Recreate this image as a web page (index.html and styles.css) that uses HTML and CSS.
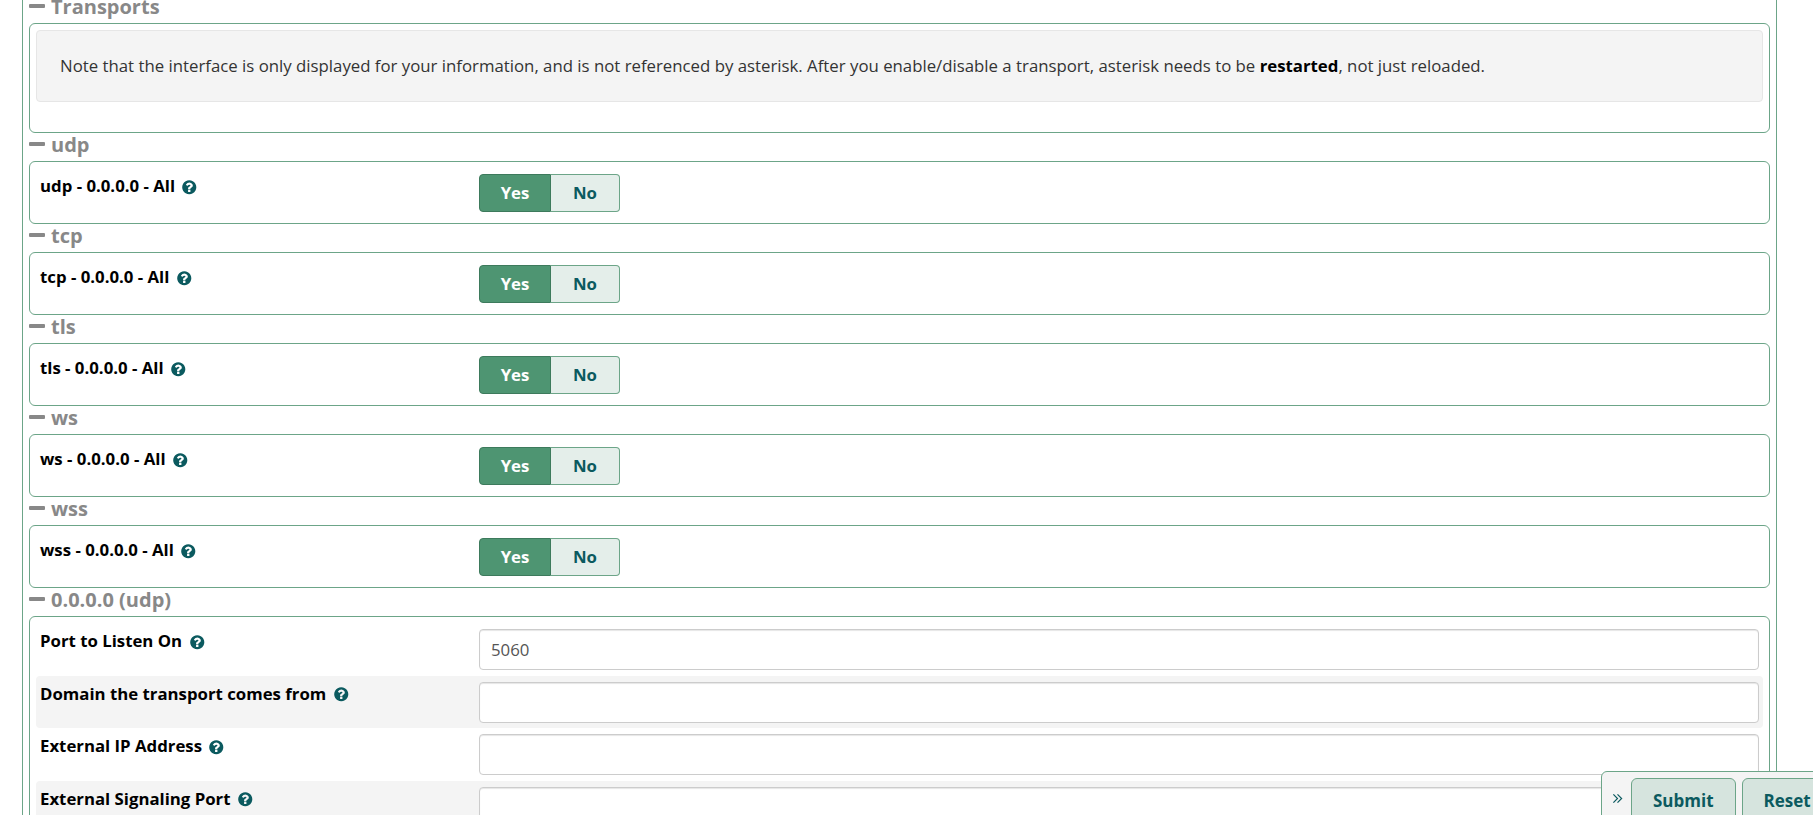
FILE: index.html
```html
<!DOCTYPE html>
<html lang="en">
<head>
  <meta charset="UTF-8">
  <meta name="viewport" content="width=device-width, initial-scale=1.0">
  <title>SIP Settings - Transports</title>
  <link rel="stylesheet" href="styles.css">
</head>
<body>

  <svg class="icon-defs" aria-hidden="true">
    <symbol id="help" viewBox="0 0 1792 1792">
      <path d="M1024 1376v-192q0-14-9-23t-23-9h-192q-14 0-23 9t-9 23v192q0 14 9 23t23 9h192q14 0 23-9t9-23zm256-672q0-88-55.5-163t-138.5-116-170-41q-243 0-371 213-15 24 8 42l132 100q7 6 19 6 16 0 25-12 53-68 86-92 34-24 86-24 48 0 85.5 26t37.5 59q0 38-20 61t-68 45q-63 28-115.5 86.5t-52.5 125.5v36q0 14 9 23t23 9h192q14 0 23-9t9-23q0-19 21.5-49.5t54.5-49.5q32-18 49-28.5t46-35 44.5-48 28-60.5 12.5-81zm384 192q0 209-103 385.5t-279.5 279.5-385.5 103-385.5-103-279.5-279.5-103-385.5 103-385.5 279.5-279.5 385.5-103 385.5 103 279.5 279.5 103 385.5z"/>
    </symbol>
  </svg>

  <div class="page">

    <!-- Transports -->
    <div class="section-title"><span class="minus"></span>Transports</div>
    <div class="section section-note">
      <div class="well">Note that the interface is only displayed for your information, and is not referenced by asterisk. After you enable/disable a transport, asterisk needs to be <b>restarted</b>, not just reloaded.</div>
    </div>

    <div class="section-title"><span class="minus"></span>udp</div>
    <div class="section">
      <div class="row">
        <label class="row-label">udp - 0.0.0.0 - All <svg class="help"><use href="#help"/></svg></label>
        <div class="toggle"><span class="toggle-yes">Yes</span><span class="toggle-no">No</span></div>
      </div>
    </div>

    <div class="section-title"><span class="minus"></span>tcp</div>
    <div class="section">
      <div class="row">
        <label class="row-label">tcp - 0.0.0.0 - All <svg class="help"><use href="#help"/></svg></label>
        <div class="toggle"><span class="toggle-yes">Yes</span><span class="toggle-no">No</span></div>
      </div>
    </div>

    <div class="section-title"><span class="minus"></span>tls</div>
    <div class="section">
      <div class="row">
        <label class="row-label">tls - 0.0.0.0 - All <svg class="help"><use href="#help"/></svg></label>
        <div class="toggle"><span class="toggle-yes">Yes</span><span class="toggle-no">No</span></div>
      </div>
    </div>

    <div class="section-title"><span class="minus"></span>ws</div>
    <div class="section">
      <div class="row">
        <label class="row-label">ws - 0.0.0.0 - All <svg class="help"><use href="#help"/></svg></label>
        <div class="toggle"><span class="toggle-yes">Yes</span><span class="toggle-no">No</span></div>
      </div>
    </div>

    <div class="section-title"><span class="minus"></span>wss</div>
    <div class="section">
      <div class="row">
        <label class="row-label">wss - 0.0.0.0 - All <svg class="help"><use href="#help"/></svg></label>
        <div class="toggle"><span class="toggle-yes">Yes</span><span class="toggle-no">No</span></div>
      </div>
    </div>

    <!-- Bind address settings -->
    <div class="section-title"><span class="minus"></span>0.0.0.0 (udp)</div>
    <div class="section section-form">
      <div class="form-row">
        <label class="row-label">Port to Listen On <svg class="help"><use href="#help"/></svg></label>
        <input type="text" class="text-input" value="5060">
      </div>
      <div class="form-row striped">
        <label class="row-label">Domain the transport comes from <svg class="help"><use href="#help"/></svg></label>
        <input type="text" class="text-input">
      </div>
      <div class="form-row">
        <label class="row-label">External IP Address <svg class="help"><use href="#help"/></svg></label>
        <input type="text" class="text-input">
      </div>
      <div class="form-row striped">
        <label class="row-label">External Signaling Port <svg class="help"><use href="#help"/></svg></label>
        <input type="text" class="text-input">
      </div>
    </div>
  </div>

  <!-- Floating action bar -->
  <div class="action-bar">
    <svg class="collapse" viewBox="0 0 12 12"><path d="M1.500 1.500 6 6l-4.500 4.500M6 1.500 10.500 6 6 10.500"/></svg>
    <button class="action-btn">Submit</button>
    <button class="action-btn">Reset</button>
  </div>

</body>
</html>
```

FILE: styles.css
```css
/* Basic Reset */
* {
  margin: 0;
  padding: 0;
  box-sizing: border-box;
}
html, body {
  height: 815px;
  overflow: hidden;
}
body {
  font-family: "Open Sans", "Liberation Sans", sans-serif;
  font-size: 16.8px;
  background-color: #fff;
  color: #333;
  position: relative;
}
.icon-defs {
  display: none;
}

/* Page column, scrolled so the first title is cut off */
.page {
  margin: -5px 36px 0 22px;
  padding: 0 6px;
  height: 840px;
  border-left: 1px solid #6ca588;
  border-right: 1px solid #6ca588;
}

/* Section titles */
.section-title {
  height: 28px;
  padding-bottom: 6px;
  display: flex;
  align-items: center;
  color: #888;
  font-size: 20px;
  font-weight: 700;
}
.minus {
  width: 16px;
  height: 4px;
  margin-right: 6px;
  border-radius: 1px;
  background-color: #888;
}

/* Sections */
.section {
  border: 1px solid #6ca588;
  border-radius: 6px;
  height: 63px;
  padding: 12px 6px 0 10px;
}
.section-note {
  height: 110px;
  padding: 6px 6px 0 6px;
}
.section-form {
  height: auto;
  padding: 6px 6px 0 6px;
}

/* Info box */
.well {
  height: 72px;
  padding: 23px 23px 0;
  background-color: #f4f4f4;
  border: 1px solid #e6e6e6;
  border-radius: 4px;
  color: #333;
}
.well b {
  color: #000;
}

/* Rows */
.row,
.form-row {
  display: grid;
  grid-template-columns: 439px 1fr;
}
.form-row {
  grid-template-columns: 443px 1fr;
  height: 52.500px;
  padding: 6px 4px 0 0;
  border-radius: 4px;
}
.form-row .row-label {
  padding-left: 4px;
}
.striped {
  background-color: #f4f4f4;
}
.row-label {
  font-weight: 700;
  color: #000;
  line-height: 24px;
  white-space: nowrap;
}
.help {
  width: 16.500px;
  height: 16.500px;
  margin-left: 2px;
  vertical-align: -3px;
  fill: #0b5a5f;
}

/* Yes/No toggle */
.toggle {
  display: flex;
  width: 141px;
  height: 38px;
  font-weight: 700;
  line-height: 36px;
  text-align: center;
}
.toggle-yes {
  width: 72px;
  background-color: #4e9572;
  border: 1px solid #3d7a5c;
  border-radius: 4px 0 0 4px;
  color: #fff;
}
.toggle-no {
  width: 69px;
  background-color: #e4eeea;
  border: 1px solid #6ca588;
  border-left: none;
  border-radius: 0 4px 4px 0;
  color: #0b5a5f;
}

/* Inputs */
.text-input {
  display: block;
  width: 100%;
  height: 41px;
  padding: 0 11px;
  font-family: inherit;
  font-size: 16.8px;
  color: #555;
  background-color: #fff;
  border: 1px solid #ccc;
  border-radius: 4px;
  box-shadow: inset 0 1px 1px rgba(0, 0, 0, 0.1);
}

/* Floating action bar */
.action-bar {
  position: absolute;
  top: 771px;
  left: 1601px;
  width: 260px;
  height: 60px;
  display: flex;
  align-items: flex-start;
  padding: 6px 0 0 10px;
  background-color: #f4f4f4;
  border: 1px solid #6ca588;
  border-radius: 6px 0 0 0;
}
.collapse {
  flex: none;
  width: 11px;
  height: 11px;
  margin: 15px 8px 0 0;
  fill: none;
  stroke: #0b5a5f;
  stroke-width: 1.300;
}
.action-btn {
  flex: none;
  height: 44px;
  padding: 0 21px;
  margin-right: 6px;
  font-family: inherit;
  font-size: 17px;
  font-weight: 700;
  color: #0b5a5f;
  background-color: #d6e4de;
  border: 1px solid #6ca588;
  border-radius: 6px;
}
```
